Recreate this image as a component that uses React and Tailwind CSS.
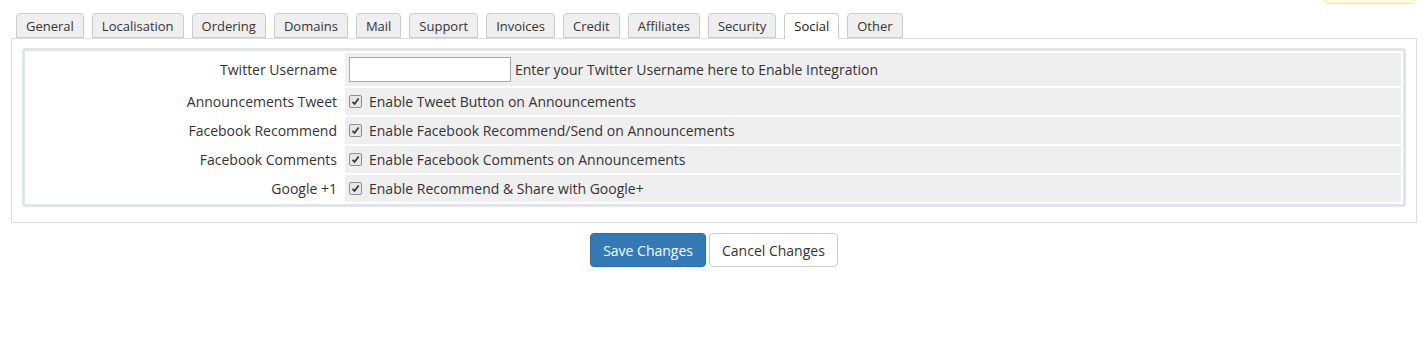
const tabs = [
  'General',
  'Localisation',
  'Ordering',
  'Domains',
  'Mail',
  'Support',
  'Invoices',
  'Credit',
  'Affiliates',
  'Security',
  'Social',
  'Other',
];

const checkRows = [
  ['Announcements Tweet', 'Enable Tweet Button on Announcements'],
  ['Facebook Recommend', 'Enable Facebook Recommend/Send on Announcements'],
  ['Facebook Comments', 'Enable Facebook Comments on Announcements'],
  ['Google +1', 'Enable Recommend & Share with Google+'],
];

const Check = () => (
  <span className="inline-flex h-[13px] w-[13px] shrink-0 items-center justify-center rounded-[2px] border border-[#8f8f8f] bg-[#e6e6e6]">
    <svg width="9" height="9" viewBox="0 0 9 9">
      <path d="M1.5 4.8 L3.6 7 L7.6 1.6" fill="none" stroke="#333" strokeWidth="1.7" />
    </svg>
  </span>
);

const App = () => {
  return (
    <div
      className="relative min-h-[347px] bg-white px-[11px] pt-[13px] text-[14px] text-[#333]"
      style={{ fontFamily: '"Open Sans", "Noto Sans", sans-serif' }}
    >
      {/* yellow notice peeking at the top */}
      <div className="absolute right-[12px] top-[-20px] h-[24px] w-[92px] rounded-[5px] border border-[#f5ea7a] bg-[#fffbd9]" />

      {/* Tabs */}
      <ul className="relative z-10 flex gap-2 pl-[5px] text-[13px]">
        {tabs.map((t) => (
          <li
            key={t}
            className={
              t === 'Social'
                ? 'h-[26px] rounded-t-[4px] border border-b-0 border-[#ccc] bg-white px-[9px] pt-[3px] leading-[18px] text-[#222]'
                : 'h-[25px] rounded-t-[4px] border border-[#ccc] bg-[#efefef] px-[9px] pt-[3px] leading-[18px]'
            }
          >
            {t}
          </li>
        ))}
      </ul>

      {/* Panel */}
      <div className="-mt-px border border-[#ddd] px-[10px] pb-[15px] pt-[9px]">
        <div className="grid grid-cols-[316px_1fr] gap-[2px] rounded-[3px] border-[3px] border-[#dfe5e8] p-[2px]">
          <div className="flex h-[33px] items-center justify-end pr-[6px]">Twitter Username</div>
          <div className="flex h-[33px] items-center gap-[4px] bg-[#efefef] pl-[4px]">
            <input
              type="text"
              className="h-[25px] w-[162px] border border-[#a9a9a9] bg-white px-1 outline-none"
            />
            <span>Enter your Twitter Username here to Enable Integration</span>
          </div>

          {checkRows.map(([label, text]) => (
            <div key={label} className="contents">
              <div className="flex h-[27px] items-center justify-end pr-[6px]">{label}</div>
              <div className="flex h-[27px] items-center gap-[7px] bg-[#efefef] pl-[4px]">
                <Check />
                <span>{text}</span>
              </div>
            </div>
          ))}
        </div>
      </div>

      {/* Buttons */}
      <div className="mt-[10px] flex justify-center gap-[3px]">
        <button className="h-[34px] rounded-[4px] border border-[#2e6da4] bg-[#337ab7] px-[12px] text-white">
          Save Changes
        </button>
        <button className="h-[34px] rounded-[4px] border border-[#ccc] bg-white px-[12px] text-[#333]">
          Cancel Changes
        </button>
      </div>
    </div>
  );
};

export default App;
